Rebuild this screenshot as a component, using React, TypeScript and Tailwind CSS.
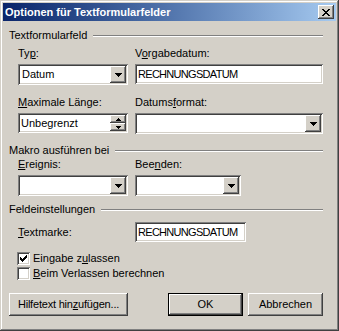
import React from 'react';

const raised =
  'shadow-[inset_-1px_-1px_0_#404040,inset_1px_1px_0_#ffffff,inset_-2px_-2px_0_#808080,inset_2px_2px_0_#d4d0c8]';
const sunken =
  'shadow-[inset_1px_1px_0_#808080,inset_-1px_-1px_0_#ffffff,inset_2px_2px_0_#404040,inset_-2px_-2px_0_#d4d0c8]';

function DownArrow() {
  return (
    <svg width="7" height="4" viewBox="0 0 7 4" shapeRendering="crispEdges">
      <path d="M0 0h7v1H0zM1 1h5v1H1zM2 2h3v1H2zM3 3h1v1H3z" fill="#000" />
    </svg>
  );
}

function SpinArrow({ up }: { up?: boolean }) {
  return (
    <svg width="5" height="3" viewBox="0 0 5 3" shapeRendering="crispEdges">
      {up ? (
        <path d="M2 0h1v1H2zM1 1h3v1H1zM0 2h5v1H0z" fill="#000" />
      ) : (
        <path d="M0 0h5v1H0zM1 1h3v1H1zM2 2h1v1H2z" fill="#000" />
      )}
    </svg>
  );
}

function Combo({ value, width }: { value?: string; width: string }) {
  return (
    <div className={`${width} h-[21px] bg-white p-[2px] flex ${sunken}`}>
      <div className="flex-1 pl-[2px] leading-[17px] whitespace-nowrap overflow-hidden">{value}</div>
      <div className={`w-[16px] h-[17px] bg-[#d4d0c8] flex items-center justify-center ${raised}`}>
        <DownArrow />
      </div>
    </div>
  );
}

function GroupHeader({ title, top }: { title: string; top: string }) {
  return (
    <div className={`flex items-center h-[13px] ${top}`}>
      <span className="leading-[13px]">{title}</span>
      <div className="flex-1 ml-[6px] border-t border-t-[#808080] border-b border-b-white" />
    </div>
  );
}

function Check({ checked }: { checked?: boolean }) {
  return (
    <div className={`w-[13px] h-[13px] bg-white flex items-center justify-center ${sunken}`}>
      {checked && (
        <svg width="7" height="7" viewBox="0 0 7 7" shapeRendering="crispEdges">
          <path
            d="M6 0h1v1H6zM5 1h2v1H5zM0 2h1v1H0zM4 2h3v1H4zM0 3h2v1H0zM3 3h3v1H3zM0 4h5v1H0zM1 5h3v1H1zM2 6h1v1H2z"
            fill="#000"
          />
        </svg>
      )}
    </div>
  );
}

export default function App() {
  return (
    <div className="w-[339px] h-[331px] bg-[#d4d0c8] p-[3px] text-[11px] text-black font-['Liberation_Sans',Arial,sans-serif] shadow-[inset_-1px_-1px_0_#404040,inset_1px_1px_0_#d4d0c8,inset_-2px_-2px_0_#808080,inset_2px_2px_0_#ffffff]">
      {/* title bar */}
      <div className="h-[18px] flex items-center bg-linear-to-r from-[#0a246a] to-[#a6caf0] pl-[2px] pr-[2px]">
        <span className="flex-1 text-white font-bold text-[11px] leading-[18px]">
          Optionen für Textformularfelder
        </span>
        <div className={`w-[16px] h-[14px] bg-[#d4d0c8] flex items-center justify-center ${raised}`}>
          <svg width="8" height="7" viewBox="0 0 8 7" shapeRendering="crispEdges">
            <path
              d="M0 0h2v1H0zM6 0h2v1H6zM1 1h2v1H1zM5 1h2v1H5zM2 2h4v1H2zM3 3h2v1H3zM2 4h4v1H2zM1 5h2v1H1zM5 5h2v1H5zM0 6h2v1H0zM6 6h2v1H6z"
              fill="#000"
            />
          </svg>
        </div>
      </div>

      {/* body */}
      <div className="pl-[6px] pr-[13px]">
        <GroupHeader title="Textformularfeld" top="mt-[8px]" />

        <div className="pl-[9px]">
          <div className="flex gap-[7px] mt-[5px] leading-[13px]">
            <div className="w-[110px]">
              Ty<u>p</u>:
            </div>
            <div className="w-[188px]">
              V<u>o</u>rgabedatum:
            </div>
          </div>
          <div className="flex gap-[7px] mt-[4px]">
            <Combo value="Datum" width="w-[110px]" />
            <div className={`w-[188px] h-[20px] bg-white p-[2px] pl-[3px] leading-[16px] tracking-[-0.7px] ${sunken}`}>
              RECHNUNGSDATUM
            </div>
          </div>

          <div className="flex gap-[7px] mt-[11px] leading-[13px]">
            <div className="w-[110px]">
              <u>M</u>aximale Länge:
            </div>
            <div className="w-[188px]">
              Datums<u>f</u>ormat:
            </div>
          </div>
          <div className="flex gap-[7px] mt-[4px]">
            <div className={`w-[110px] h-[20px] bg-white p-[2px] flex ${sunken}`}>
              <div className="flex-1 pl-[1px] leading-[16px]">Unbegrenzt</div>
              <div className="w-[16px] flex flex-col">
                <div className={`h-[8px] bg-[#d4d0c8] flex items-center justify-center ${raised}`}>
                  <SpinArrow up />
                </div>
                <div className={`h-[8px] bg-[#d4d0c8] flex items-center justify-center ${raised}`}>
                  <SpinArrow />
                </div>
              </div>
            </div>
            <Combo width="w-[188px]" />
          </div>
        </div>

        <GroupHeader title="Makro ausführen bei" top="mt-[10px]" />

        <div className="pl-[9px]">
          <div className="flex gap-[7px] mt-[1px] leading-[13px]">
            <div className="w-[110px]">
              <u>E</u>reignis:
            </div>
            <div className="w-[106px]">
              Bee<u>n</u>den:
            </div>
          </div>
          <div className="flex gap-[7px] mt-[4px]">
            <Combo width="w-[110px]" />
            <Combo width="w-[106px]" />
          </div>
        </div>

        <GroupHeader title="Feldeinstellungen" top="mt-[7px]" />

        <div className="pl-[9px]">
          <div className="flex gap-[7px] mt-[6px] items-center">
            <div className="w-[110px] leading-[13px]">
              <u>T</u>extmarke:
            </div>
            <div className={`w-[111px] h-[20px] bg-white p-[2px] pl-[3px] leading-[16px] whitespace-nowrap overflow-hidden tracking-[-0.7px] ${sunken}`}>
              RECHNUNGSDATUM
            </div>
          </div>

          <div className="flex items-center gap-[3px] mt-[10px] ml-[-1px]">
            <Check checked />
            <span className="leading-[13px]">
              Eingabe z<u>u</u>lassen
            </span>
          </div>
          <div className="flex items-center gap-[3px] mt-[2px] ml-[-1px]">
            <Check />
            <span className="leading-[13px]">
              <u>B</u>eim Verlassen berechnen
            </span>
          </div>
        </div>

        <div className="flex mt-[13px]">
          <div className={`w-[119px] h-[23px] leading-[23px] text-center tracking-[-0.2px] ${raised}`}>
            Hilfetext hin<u>z</u>ufügen...
          </div>
          <div className="ml-[40px] w-[75px] h-[23px] border border-black">
            <div className={`h-full leading-[21px] text-center ${raised}`}>OK</div>
          </div>
          <div className={`ml-[5px] w-[75px] h-[23px] leading-[23px] text-center ${raised}`}>
            Abbrechen
          </div>
        </div>
      </div>
    </div>
  );
}
